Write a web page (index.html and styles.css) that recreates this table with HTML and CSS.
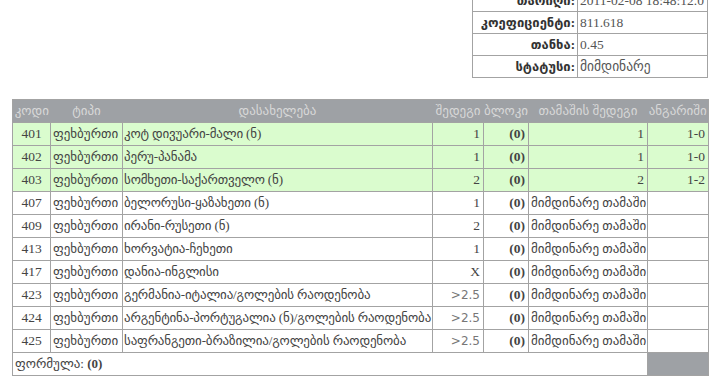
FILE: index.html
```html
<!DOCTYPE html>
<html>
<head>
<meta charset="utf-8">
<link rel="stylesheet" href="styles.css">
</head>
<body>
<div class="page">
  <table class="info">
    <tr><th>თარიღი:</th><td>2011-02-08 18:48:12.0</td></tr>
    <tr><th>კოეფიციენტი:</th><td>811.618</td></tr>
    <tr><th>თანხა:</th><td>0.45</td></tr>
    <tr><th>სტატუსი:</th><td>მიმდინარე</td></tr>
  </table>

  <table class="bets">
    <colgroup>
      <col class="c-code"><col class="c-type"><col class="c-name"><col class="c-res"><col class="c-block"><col class="c-game"><col class="c-score">
    </colgroup>
    <thead>
      <tr><th>კოდი</th><th>ტიპი</th><th>დასახელება</th><th>შედეგი</th><th>ბლოკი</th><th>თამაშის შედეგი</th><th>ანგარიში</th></tr>
    </thead>
    <tbody>
      <tr class="done"><td class="code">401</td><td>ფეხბურთი</td><td class="name">კოტ დივუარი-მალი (ნ)</td><td class="res">1</td><td class="blk">(0)</td><td class="num">1</td><td class="num">1-0</td></tr>
      <tr class="done"><td class="code">402</td><td>ფეხბურთი</td><td class="name">პერუ-პანამა</td><td class="res">1</td><td class="blk">(0)</td><td class="num">1</td><td class="num">1-0</td></tr>
      <tr class="done"><td class="code">403</td><td>ფეხბურთი</td><td class="name">სომხეთი-საქართველო (ნ)</td><td class="res">2</td><td class="blk">(0)</td><td class="num">2</td><td class="num">1-2</td></tr>
      <tr><td class="code">407</td><td>ფეხბურთი</td><td class="name">ბელორუსი-ყაზახეთი (ნ)</td><td class="res">1</td><td class="blk">(0)</td><td>მიმდინარე თამაში</td><td></td></tr>
      <tr><td class="code">409</td><td>ფეხბურთი</td><td class="name">ირანი-რუსეთი (ნ)</td><td class="res">2</td><td class="blk">(0)</td><td>მიმდინარე თამაში</td><td></td></tr>
      <tr><td class="code">413</td><td>ფეხბურთი</td><td class="name">ხორვატია-ჩეხეთი</td><td class="res">1</td><td class="blk">(0)</td><td>მიმდინარე თამაში</td><td></td></tr>
      <tr><td class="code">417</td><td>ფეხბურთი</td><td class="name">დანია-ინგლისი</td><td class="res">X</td><td class="blk">(0)</td><td>მიმდინარე თამაში</td><td></td></tr>
      <tr><td class="code">423</td><td>ფეხბურთი</td><td class="name">გერმანია-იტალია/გოლების რაოდენობა</td><td class="res sans">&gt;2.5</td><td class="blk">(0)</td><td>მიმდინარე თამაში</td><td></td></tr>
      <tr><td class="code">424</td><td>ფეხბურთი</td><td class="name">არგენტინა-პორტუგალია (ნ)/გოლების რაოდენობა</td><td class="res sans">&gt;2.5</td><td class="blk">(0)</td><td>მიმდინარე თამაში</td><td></td></tr>
      <tr><td class="code">425</td><td>ფეხბურთი</td><td class="name">საფრანგეთი-ბრაზილია/გოლების რაოდენობა</td><td class="res sans">&gt;2.5</td><td class="blk">(0)</td><td>მიმდინარე თამაში</td><td></td></tr>
      <tr class="formula"><td colspan="6">ფორმულა: <b>(0)</b></td><td class="gray"></td></tr>
    </tbody>
  </table>
</div>
</body>
</html>
```
FILE: styles.css
```css
html, body {
  margin: 0;
  padding: 0;
  background: #ffffff;
  overflow: hidden;
}
body {
  font-family: "Liberation Serif", "DejaVu Sans", serif;
  font-size: 13px;
  color: #444;
}
.page {
  padding: 0 3px 0 12px;
  margin-top: -11px;
}
table {
  border-collapse: collapse;
}
.info {
  margin-left: auto;
  width: 236px;
  border: 1px solid #a3a3a3;
}
.info th, .info td {
  border: 1px solid #a3a3a3;
  height: 21px;
  padding: 0 2px;
  white-space: nowrap;
  overflow: hidden;
}
.info th {
  width: 100px;
  text-align: right;
  font-weight: bold;
  color: #333;
}
.info td {
  text-align: left;
  color: #555;
  font-size: 13.5px;
}
.bets {
  margin-top: 21px;
  width: 696px;
  table-layout: fixed;
  border: 1px solid #a3a3a3;
}
.c-code { width: 38px; }
.c-type { width: 72px; }
.c-name { width: 310px; }
.c-res { width: 51px; }
.c-block { width: 45px; }
.c-game { width: 119px; }
.c-score { width: 61px; }
.bets thead th {
  background: #9ea1a5;
  color: #d8d8d8;
  font-weight: normal;
  height: 22px;
  padding: 0;
  text-align: center;
  white-space: nowrap;
  overflow: hidden;
  border: none;
}
.bets td {
  border: 1px solid #a3a3a3;
  height: 22px;
  padding: 0 2px;
  white-space: nowrap;
  overflow: hidden;
  text-align: left;
}
.bets td.name {
  padding-left: 1px;
  letter-spacing: -0.15px;
}
.bets tr.done td {
  background: #dafcce;
}
.bets td.code {
  text-align: center;
  font-size: 13.5px;
}
.bets td.res, .bets td.num, .bets td.blk {
  text-align: right;
  padding-right: 3px;
  font-size: 13.5px;
}
.bets td.blk {
  font-weight: bold;
}
.bets td.sans {
  font-family: "DejaVu Sans", sans-serif;
  font-size: 12px;
  color: #777;
}
.bets td.gray {
  background: #9ea1a5;
}
```
